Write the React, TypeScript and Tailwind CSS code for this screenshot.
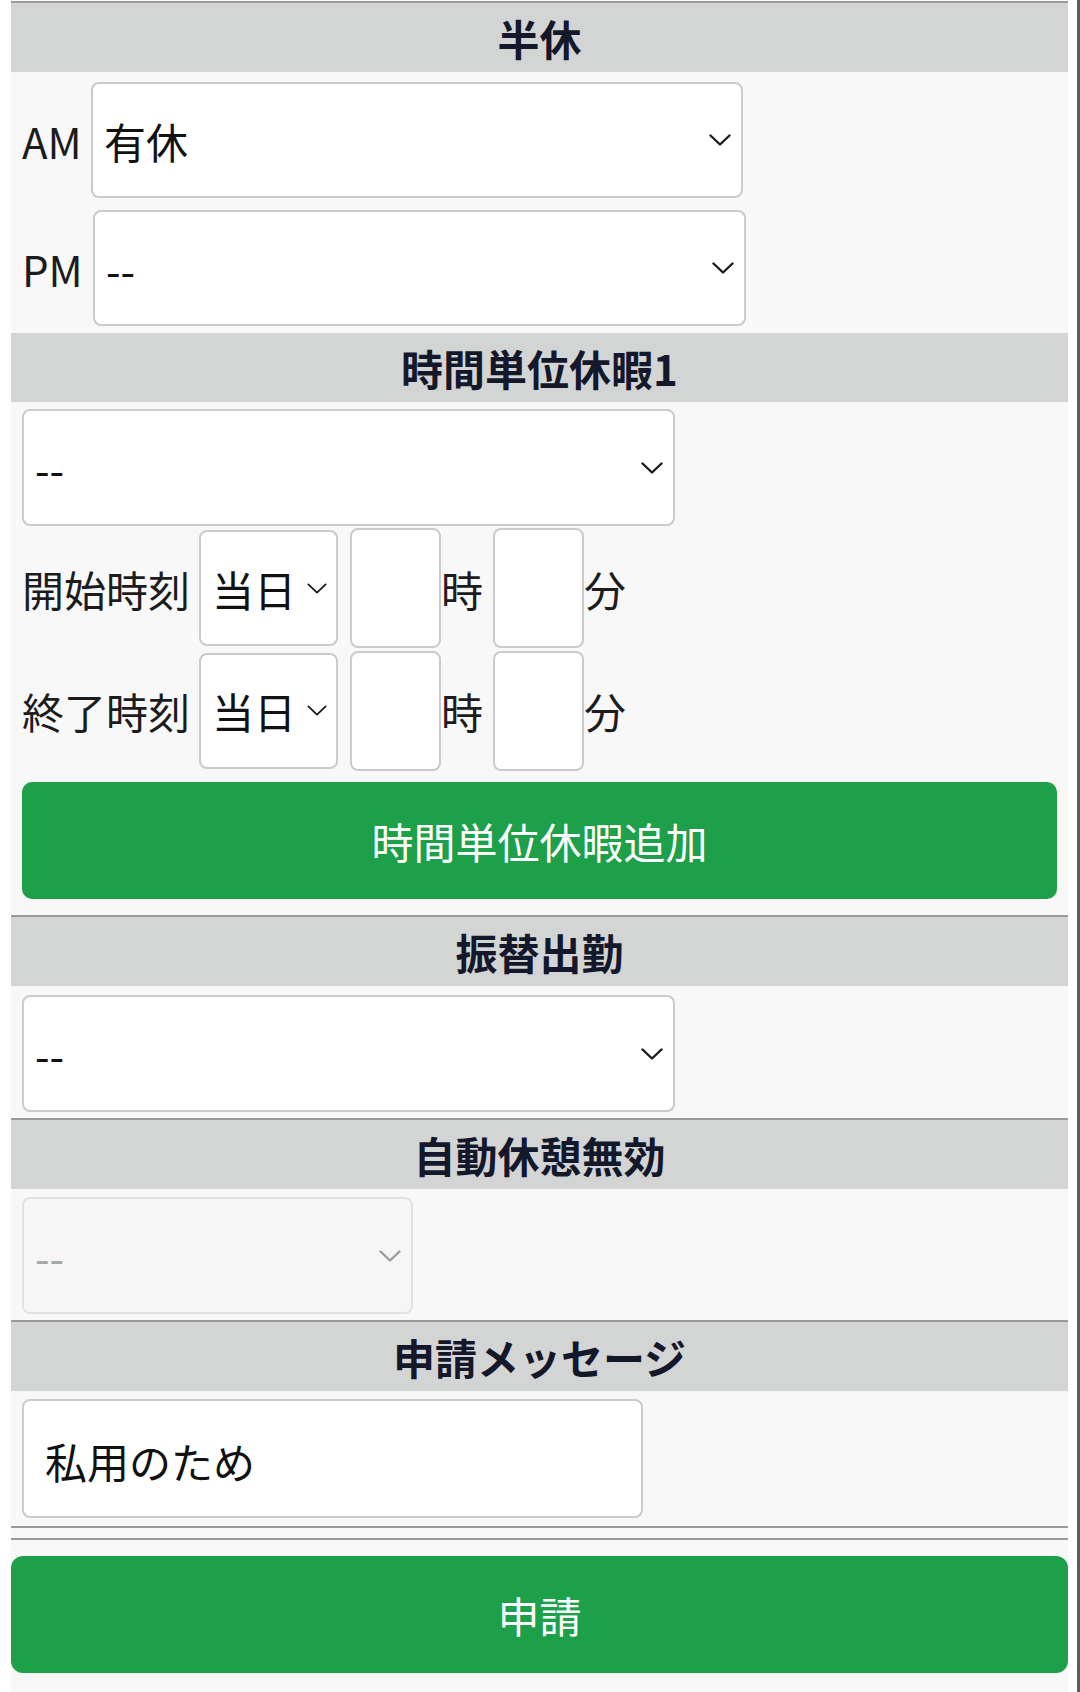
import React from 'react';
import clsx from 'clsx';

// Small down chevron used inside the select boxes
const Chevron: React.FC<{ className?: string; strokeWidth?: number }> = ({ className, strokeWidth = 2.4 }) => (
  <svg viewBox="0 0 22 12" fill="none" stroke="currentColor" strokeWidth={strokeWidth} strokeLinecap="round" strokeLinejoin="round" className={className}>
    <path d="M1.5 1.5 L11 10.5 L20.5 1.5" />
  </svg>
);

interface SelectBoxProps {
  value: string;
  className?: string;
  disabled?: boolean;
  compact?: boolean;
}

const SelectBox: React.FC<SelectBoxProps> = ({ value, className, disabled = false, compact = false }) => (
  <div
    className={clsx(
      'flex shrink-0 items-center justify-between rounded-[8px] border-2',
      disabled ? 'border-[#e2e2e2] bg-[#f6f6f6] text-[#a8a8a8]' : 'border-[#cbcbcb] bg-white text-[#111]',
      compact ? 'pl-[11px] pr-[9px]' : 'pl-[11px] pr-[10px]',
      className
    )}
  >
    <span className="whitespace-nowrap">{value}</span>
    <Chevron
      strokeWidth={compact ? 2 : 2.4}
      className={clsx(
        compact ? 'h-[11px] w-[20px]' : 'h-[12px] w-[22px]',
        disabled ? 'text-[#9c9c9c]' : 'text-[#1b1b1b]'
      )}
    />
  </div>
);

const SectionHeader: React.FC<{ title: string }> = ({ title }) => (
  <div className="flex h-[69px] items-center justify-center bg-[#d3d5d4] text-[42px] font-bold text-[#14182b]">
    {title}
  </div>
);

const TimeInput: React.FC = () => (
  <div className="h-[120px] w-[91px] shrink-0 rounded-[8px] border-2 border-[#cbcbcb] bg-white" />
);

const TimeRow: React.FC<{ label: string; className?: string }> = ({ label, className }) => (
  <div className={clsx('flex items-center text-[42px] text-[#1c1c1c]', className)}>
    <span className="w-[177px] shrink-0 whitespace-nowrap">{label}</span>
    <SelectBox value="当日" compact className="h-[116px] w-[139px]" />
    <div className="ml-[12px]">
      <TimeInput />
    </div>
    <span className="w-[52px] shrink-0">時</span>
    <TimeInput />
    <span>分</span>
  </div>
);

export default function App() {
  return (
    <div className="flex min-h-[1692px] bg-white font-['Noto_Sans_CJK_JP','Noto_Sans',sans-serif] text-[42px]">
      <div className="w-[11px] shrink-0" />

      <main className="mt-[1px] w-[1057px] shrink-0 bg-[#f8f8f8]">
        {/* 半休 + 時間単位休暇 */}
        <section className="border-t-2 border-[#9a9a9a]">
          <SectionHeader title="半休" />
          <div className="flex flex-col gap-[12px] pt-[10px] pb-[7px] text-[#1c1c1c]">
            <div className="flex items-center">
              <span className="w-[80px] shrink-0 pl-[11px]">AM</span>
              <SelectBox value="有休" className="h-[116px] w-[652px]" />
            </div>
            <div className="flex items-center">
              <span className="w-[82px] shrink-0 pl-[11px]">PM</span>
              <SelectBox value="--" className="h-[116px] w-[653px]" />
            </div>
          </div>

          <SectionHeader title="時間単位休暇1" />
          <div className="flex flex-col px-[11px] pt-[7px] pb-[16px]">
            <SelectBox value="--" className="h-[117px] w-[653px]" />
            <TimeRow label="開始時刻" className="mt-[2px] h-[120px]" />
            <TimeRow label="終了時刻" className="mt-[2px] h-[121px]" />
            <button className="mt-[11px] h-[117px] w-full rounded-[10px] bg-[#1e9f4a] text-[42px] text-white">
              時間単位休暇追加
            </button>
          </div>
        </section>

        {/* 振替出勤 */}
        <section className="border-t-2 border-[#9a9a9a]">
          <SectionHeader title="振替出勤" />
          <div className="px-[11px] pt-[9px] pb-[6px]">
            <SelectBox value="--" className="h-[117px] w-[653px]" />
          </div>
        </section>

        {/* 自動休憩無効 */}
        <section className="border-t-2 border-[#9a9a9a]">
          <SectionHeader title="自動休憩無効" />
          <div className="px-[11px] pt-[8px] pb-[6px]">
            <SelectBox value="--" disabled className="h-[117px] w-[391px]" />
          </div>
        </section>

        {/* 申請メッセージ */}
        <section className="border-y-2 border-[#9a9a9a]">
          <SectionHeader title="申請メッセージ" />
          <div className="px-[11px] pt-[8px] pb-[8px]">
            <div className="flex h-[119px] w-[621px] items-center rounded-[8px] border-2 border-[#cbcbcb] bg-white pt-[4px] pl-[21px] text-[#111]">
              私用のため
            </div>
          </div>
        </section>

        <div className="mt-[10px] border-t-2 border-[#9a9a9a] pt-[16px] pb-[19px]">
          <button className="h-[117px] w-full rounded-[12px] bg-[#1e9f4a] text-[42px] text-white">申請</button>
        </div>
      </main>

      <div className="w-[9px] shrink-0" />
      <div className="w-[3px] shrink-0 bg-[#5c5c5c]" />
    </div>
  );
}
